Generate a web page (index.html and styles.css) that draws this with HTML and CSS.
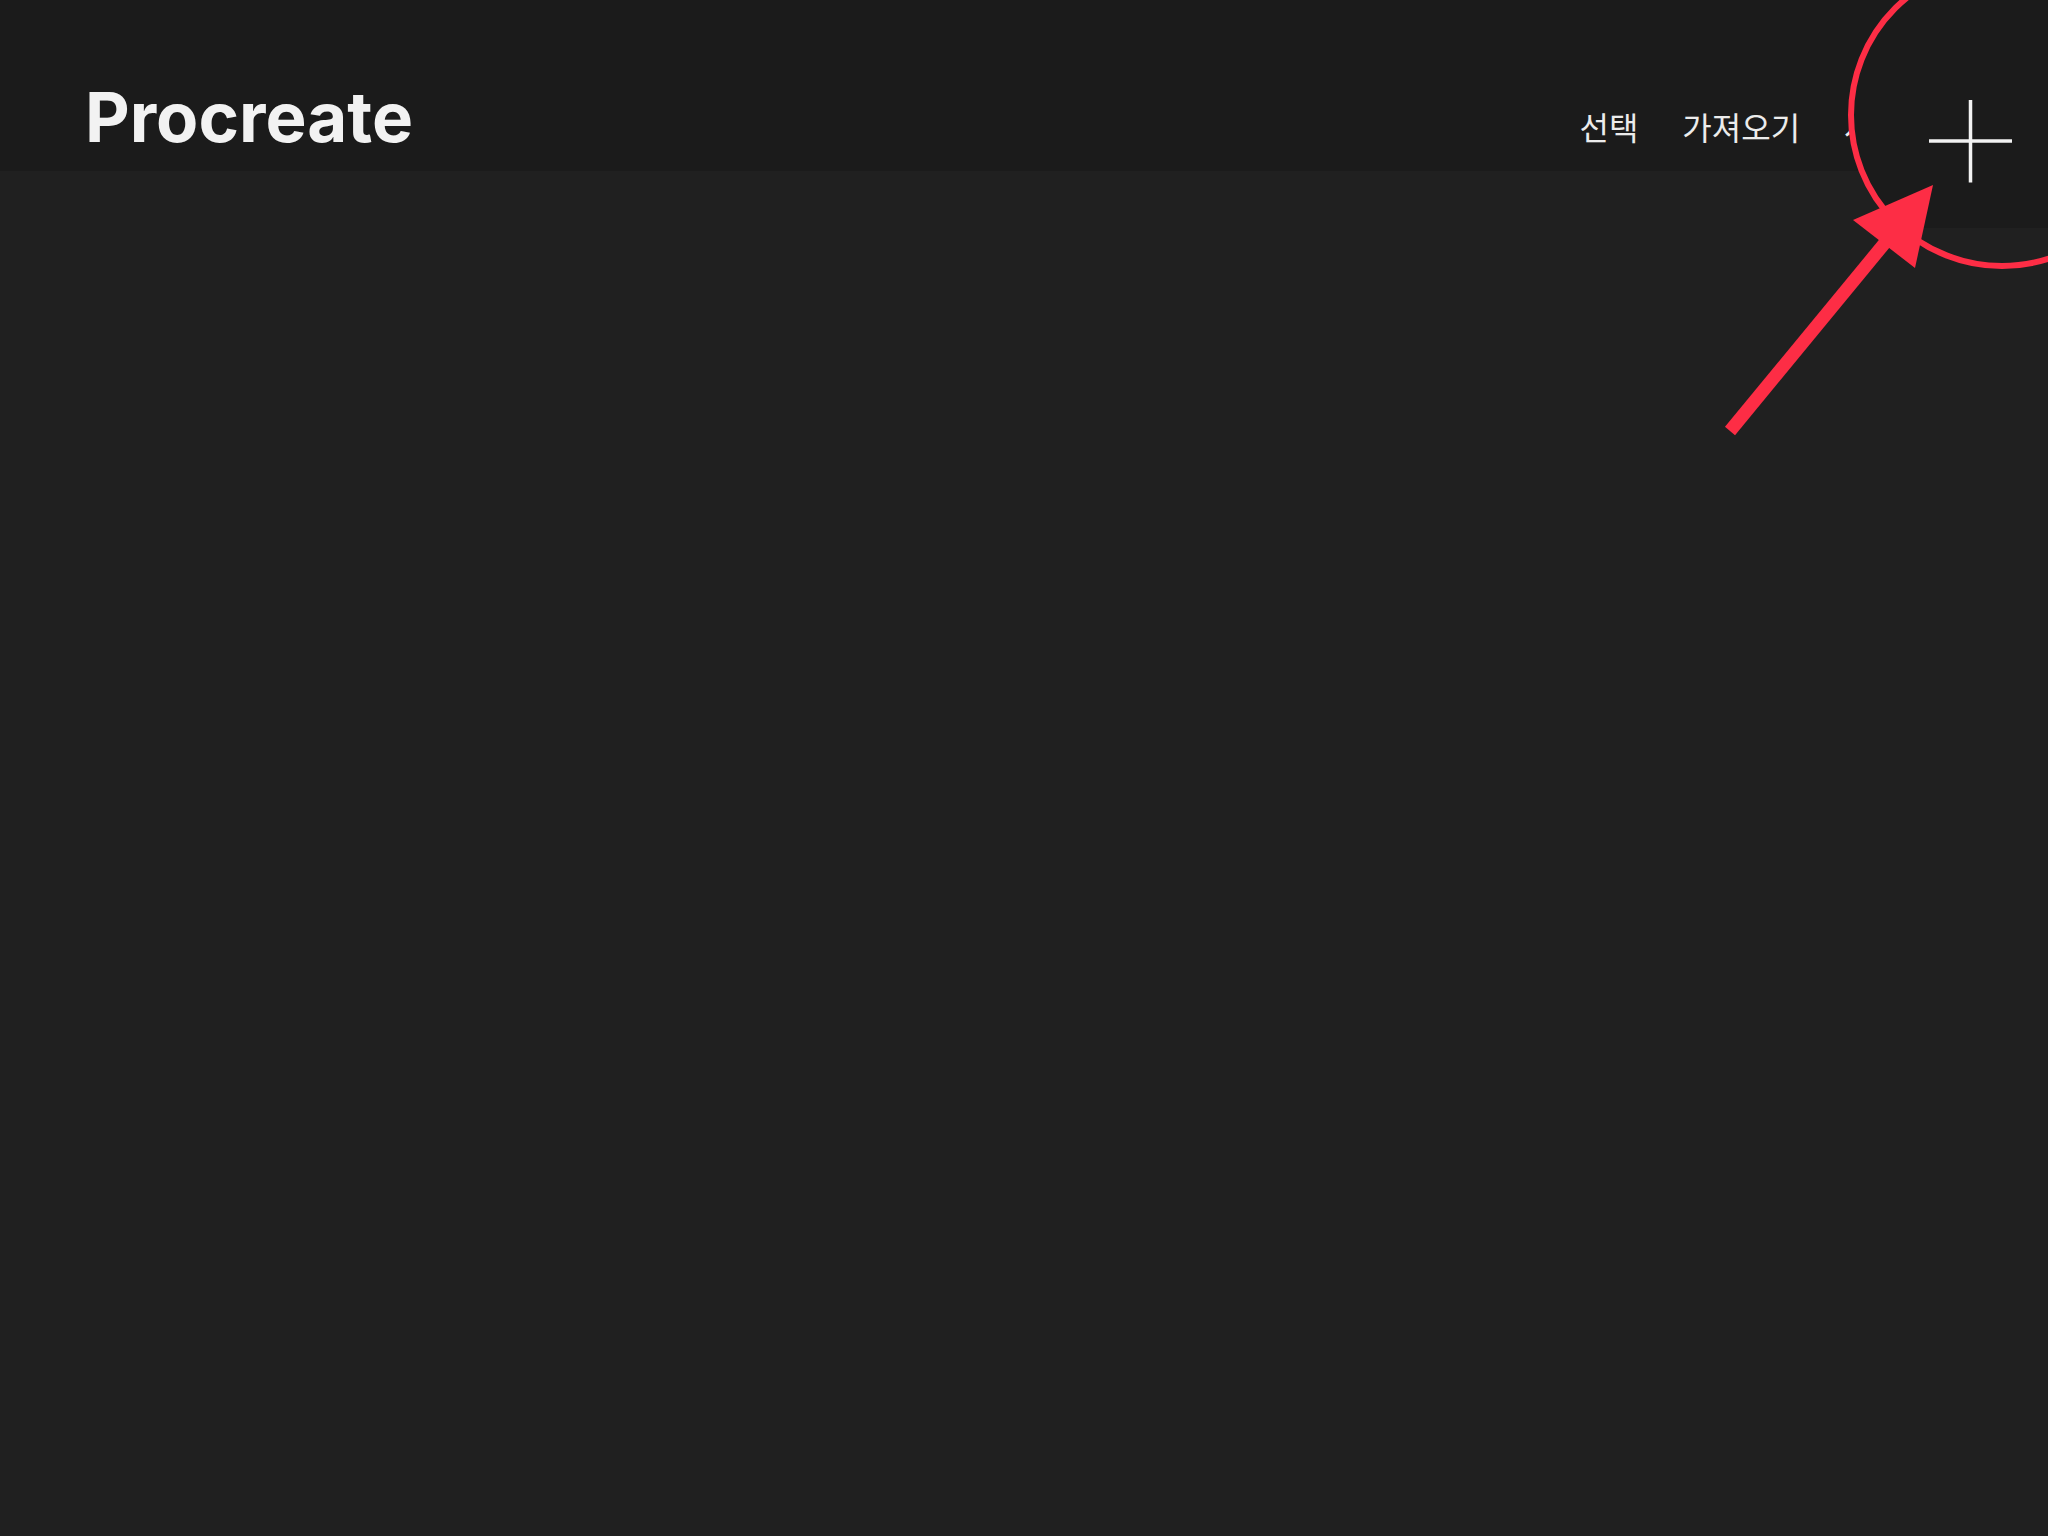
FILE: index.html
```html
<!DOCTYPE html>
<html lang="ko">
<head>
  <meta charset="utf-8">
  <title>Procreate</title>
  <link rel="stylesheet" href="styles.css">
</head>
<body>

  <div id="gallery">
    <div class="topbar">
      <h1 class="title">Procreate</h1>
      <div class="actions">
        <span class="action">선택</span>
        <span class="action">가져오기</span>
        <span class="action">사진</span>
        <span class="new-canvas">
          <svg width="84" height="84" viewBox="0 0 84 84">
            <line x1="42" y1="1" x2="42" y2="83" stroke="#f2f2f2" stroke-width="3.5"/>
            <line x1="0" y1="42" x2="84" y2="42" stroke="#f2f2f2" stroke-width="3.5"/>
          </svg>
        </span>
      </div>
    </div>
    <div class="canvas-list"></div>
  </div>

  <!-- annotation: loupe over the + button, arrow pointing at it -->
  <svg class="markup" width="2048" height="480" viewBox="0 0 2048 480">
    <defs>
      <clipPath id="lens">
        <circle cx="2002" cy="115" r="151"/>
      </clipPath>
    </defs>
    <g clip-path="url(#lens)">
      <rect x="1840" y="-50" width="220" height="278" fill="#1b1b1b"/>
      <rect x="1840" y="228" width="220" height="100" fill="#202020"/>
      <line x1="1970.5" y1="100" x2="1970.5" y2="182.5" stroke="#f2f2f2" stroke-width="3.5"/>
      <line x1="1929" y1="141" x2="2012" y2="141" stroke="#f2f2f2" stroke-width="3.5"/>
    </g>
    <circle cx="2002" cy="115" r="151" fill="none" stroke="#fd2d45" stroke-width="6"/>
    <line x1="1730" y1="431" x2="1898" y2="227" stroke="#fd2d45" stroke-width="13"/>
    <polygon points="1933,185 1853,220 1915,268" fill="#fd2d45"/>
  </svg>

</body>
</html>
```

FILE: styles.css
```css
* {
  box-sizing: border-box;
}
body {
  margin: 0;
  background-color: #202020;
  overflow: hidden;
}
#gallery {
  width: 2048px;
  height: 1536px;
  display: flex;
  flex-direction: column;
}
.topbar {
  height: 171px;
  background-color: #1b1b1b;
  display: flex;
  align-items: flex-start;
  padding: 0 36px 0 85px;
}
.title {
  margin: 83px 0 0;
  font: bold 69px/68px Inter, "Liberation Sans", sans-serif;
  letter-spacing: 0;
  color: #f2f2f2;
}
.actions {
  margin-left: auto;
  display: flex;
  align-items: flex-start;
  gap: 44px;
}
.action {
  margin-top: 110px;
  font: 32px/32px "Noto Sans CJK KR", sans-serif;
  color: #ececec;
}
.new-canvas {
  margin-top: 99px;
  margin-left: -19px;
  width: 84px;
  height: 84px;
}
.canvas-list {
  flex: 1;
}
.markup {
  position: absolute;
  top: 0;
  left: 0;
  pointer-events: none;
}
```
